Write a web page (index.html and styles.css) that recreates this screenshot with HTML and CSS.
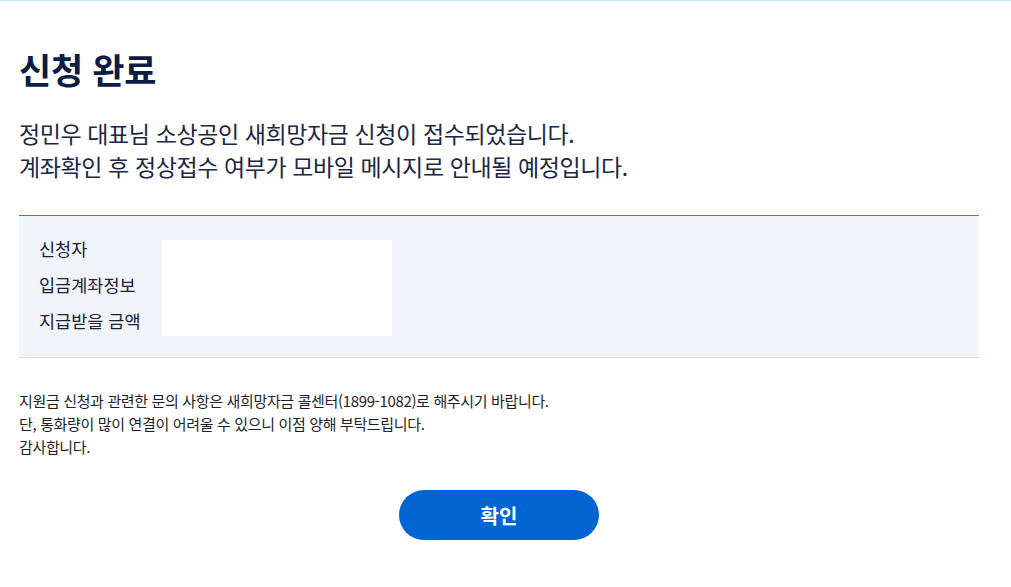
FILE: index.html
```html
<!DOCTYPE html>
<html lang="ko">
<head>
<meta charset="utf-8">
<link rel="stylesheet" href="styles.css">
</head>
<body>
<div class="page">
  <h1 class="title">신청 완료</h1>
  <p class="lead">정민우 대표님 소상공인 새희망자금 신청이 접수되었습니다.<br>계좌확인 후 정상접수 여부가 모바일 메시지로 안내될 예정입니다.</p>
  <div class="panel">
    <ul class="labels">
      <li>신청자</li>
      <li>입금계좌정보</li>
      <li>지급받을 금액</li>
    </ul>
    <div class="values"></div>
  </div>
  <p class="notice">지원금 신청과 관련한 문의 사항은 새희망자금 콜센터(1899-1082)로 해주시기 바랍니다.<br>단, 통화량이 많이 연결이 어려울 수 있으니 이점 양해 부탁드립니다.<br>감사합니다.</p>
  <div class="actions">
    <button class="btn" type="button">확인</button>
  </div>
</div>
</body>
</html>
```
FILE: styles.css
```css
html, body {
  margin: 0;
  padding: 0;
  background: #ffffff;
}
body {
  border-top: 1px solid #b3e6fb;
  font-family: "Noto Sans CJK KR", "Noto Sans", sans-serif;
  color: #1b2540;
}
.page {
  width: 960px;
  padding-left: 19px;
}
.title {
  margin: 46px 0 0;
  font-size: 35px;
  line-height: 44px;
  font-weight: 700;
  color: #0b1c45;
  letter-spacing: -0.3px;
}
.lead {
  margin: 26px 0 0;
  font-size: 23px;
  line-height: 33px;
  color: #1a2746;
  letter-spacing: -0.4px;
}
.panel {
  margin-top: 32px;
  display: flex;
  background: #f1f4f9;
  border-top: 1px solid #5c6ad4;
  border-bottom: 1px solid #d6dcf1;
  padding: 15px 20px 18px;
}
.labels {
  list-style: none;
  margin: 0;
  padding: 0;
  width: 123px;
  font-size: 17.5px;
  line-height: 36px;
  color: #1b2236;
}
.values {
  margin-top: 9px;
  width: 230px;
  height: 96px;
  background: #ffffff;
}
.notice {
  margin: 31px 0 0;
  font-size: 15px;
  line-height: 23px;
  color: #1b1f2a;
  letter-spacing: -0.35px;
}
.actions {
  display: flex;
  justify-content: center;
  margin-top: 32px;
}
.btn {
  width: 200px;
  height: 50px;
  border: 0;
  border-radius: 25px;
  background: #0064d2;
  color: #ffffff;
  font-family: "Noto Sans CJK KR", "Noto Sans", sans-serif;
  font-size: 20px;
  font-weight: 700;
  padding: 0;
}
```
